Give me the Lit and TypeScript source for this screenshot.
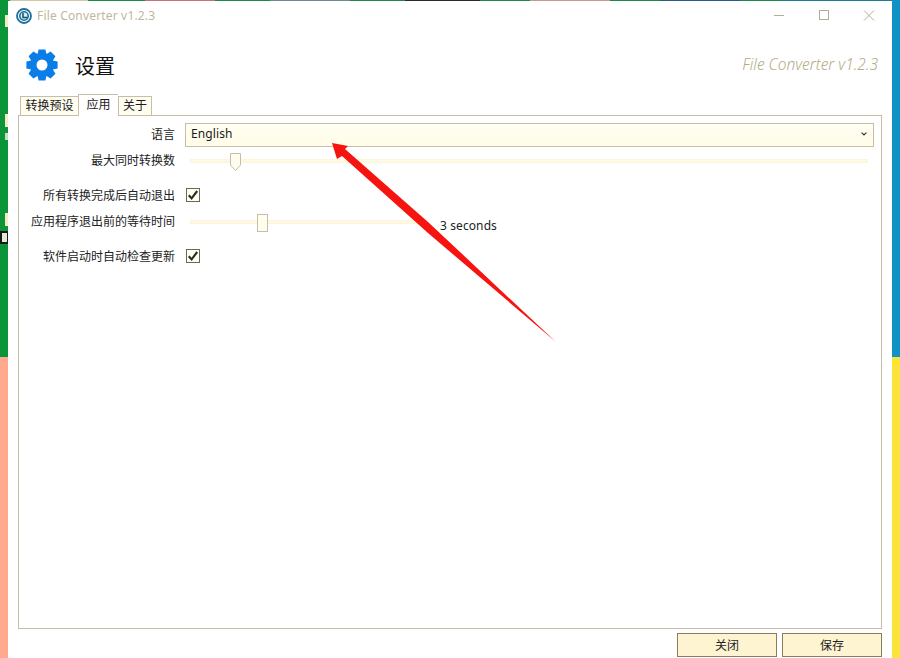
import { LitElement, html, css, svg } from "lit";
import { customElement } from "lit/decorators.js";

const FONT = css`"Noto Sans", "Noto Sans CJK SC", sans-serif`;

@customElement("app-root")
export class AppRoot extends LitElement {
  static styles = css`
    :host {
      display: block;
      position: relative;
      width: 900px;
      height: 658px;
      overflow: hidden;
      font-family: ${FONT};
      color: #1a1a1a;
      background:
        linear-gradient(to right,
          #0b9438 0 10px, #cfc8a8 10px 88px, #1a8a48 88px 145px, #c9707a 145px 215px,
          #1a8a48 215px 270px, #6f8a94 270px 350px, #1a8a48 350px 405px, #2a2a2a 405px 480px,
          #1a8a48 480px 530px, #c99a88 530px 610px, #1a8a48 610px 660px, #2d5a80 660px 740px,
          #1a8a48 740px 780px, #1b7f94 780px 892px, #0f93c4 892px) 0 0 / 100% 1px no-repeat,
        linear-gradient(#f1ecc6, #f1ecc6) 5px 15px / 3px 12px no-repeat,
        linear-gradient(#f1ecc6, #f1ecc6) 5px 114px / 3px 13px no-repeat,
        linear-gradient(#f1ecc6, #f1ecc6) 5px 213px / 3px 13px no-repeat,
        linear-gradient(#c8dcc8, #c8dcc8) 5px 133px / 3px 7px no-repeat,
        linear-gradient(#e6e6da, #e6e6da) 2px 233px / 5px 9px no-repeat,
        linear-gradient(#101d12, #101d12) 0 231px / 8px 13px no-repeat,
        linear-gradient(to right, #0b9438 0 8px, transparent 8px 892px, #0f93c4 892px) 0 0 / 100% 357px no-repeat,
        linear-gradient(to right, #ffa98f 0 8px, transparent 8px 892px, #fbe43a 892px) 0 357px / 100% 301px no-repeat;
    }
    .frame {
      box-sizing: border-box;
      height: 658px;
      padding: 1px 8px 0;
      display: flex;
    }
    .win {
      flex: 1;
      background: #fff;
      display: flex;
      flex-direction: column;
      padding: 0 10px 1px;
      min-width: 0;
    }
    .titlebar {
      height: 29px;
      margin: 0 -10px;
      padding: 0 0 0 8px;
      display: flex;
      align-items: center;
      font-size: 12px;
      letter-spacing: 0.17px;
      color: #bfb79d;
    }
    .titlebar .name { margin-left: 5px; }
    .titlebar .grow { flex: 1; }
    .wbtn { width: 45px; height: 29px; display: flex; align-items: center; justify-content: center; }
    .wbtn.last { width: 46px; }
    .header {
      height: 64px;
      box-sizing: border-box;
      padding: 6px 4px 0 8px;
      display: flex;
      align-items: center;
      gap: 17px;
    }
    .header h1 {
      margin: 0;
      font-size: 20px;
      font-weight: 400;
      color: #111;
      flex: 1;
    }
    .version {
      font-size: 15.5px;
      font-style: italic;
      font-weight: 300;
      color: #b5ac86;
      margin-top: -3px;
    }
    .tabs {
      display: flex;
      align-items: flex-end;
      height: 22px;
      padding-left: 2px;
      position: relative;
      z-index: 1;
      margin-bottom: -1px;
    }
    .tab {
      box-sizing: border-box;
      height: 19px;
      margin-bottom: 1px;
      border: 1px solid #c7bfa5;
      border-bottom: none;
      border-right: none;
      font-size: 12px;
      line-height: 18px;
      padding: 0 2px;
      text-align: center;
      background: #fffdf0;
    }
    .tab:nth-child(1) { width: 58px; }
    .tab.active { width: 40px; height: 22px; margin-bottom: 0; background: #fff; line-height: 20px; }
    .tab:nth-child(3) { width: 34px; border-right: 1px solid #c7bfa5; }
    .panel {
      flex: 1;
      border: 1px solid #c7bfa5;
      box-sizing: border-box;
      padding: 7px 7px 0 0;
      display: flex;
      flex-direction: column;
      min-height: 0;
    }
    .row {
      display: grid;
      grid-template-columns: 156px 1fr;
      column-gap: 10px;
      align-items: center;
      font-size: 12px;
    }
    .label { text-align: right; color: #222; line-height: 16px; white-space: nowrap; }
    .r-lang { height: 24px; }
    .r-max { height: 24px; margin-top: 2px; margin-bottom: 15px; }
    .r-auto { height: 14px; margin-bottom: 7px; }
    .r-wait { height: 24px; margin-bottom: 16px; }
    .r-upd { height: 14px; }
    .r-auto .label, .r-upd .label { height: 14px; line-height: 15px; }
    .select {
      box-sizing: border-box;
      height: 24px;
      border: 1px solid #c7bfa5;
      background: linear-gradient(#fffef2, #fffce8);
      display: flex;
      align-items: center;
      justify-content: space-between;
      padding: 0 6px 3px 5px;
      font-size: 12px;
      letter-spacing: 0.1px;
    }
    .slider {
      position: relative;
      height: 24px;
      margin: 0 6px 0 5px;
    }
    .slider .track {
      position: absolute;
      left: 0; right: 0; top: 10px;
      height: 4px;
      box-sizing: border-box;
      border: 1px solid #fbf5dc;
      background: #fff9e2;
    }
    .slider svg { position: absolute; top: 4px; left: var(--thumb); }
    .waitwrap { display: flex; align-items: center; }
    .waitwrap .slider { width: 230px; flex: none; }
    .waitwrap span { font-size: 12px; margin: 8px 0 0 14px; color: #222; letter-spacing: .1px; }
    .check {
      box-sizing: border-box;
      width: 14px;
      height: 14px;
      margin-left: 1px;
      border: 1px solid #6d6650;
      background: #fffef4;
      display: flex;
      align-items: center;
      justify-content: center;
    }
    .footer {
      height: 28px;
      display: flex;
      justify-content: flex-end;
      align-items: flex-end;
      gap: 5px;
    }
    .btn {
      box-sizing: border-box;
      width: 100px;
      height: 24px;
      border: 1px solid #8a7d5f;
      background: #fff4d2;
      font: 12px ${FONT};
      color: #222;
      padding: 0;
    }
    .arrow { position: absolute; left: 0; top: 0; pointer-events: none; }
  `;

  private gear() {
    const teeth = [0, 45, 90, 135, 180, 225, 270, 315];
    return html`<svg width="32" height="32" viewBox="-16 -16 32 32">
      ${teeth.map((a) => svg`<path d="M-3.4-15.6h6.8l1.4 6h-9.6z" fill="#0a7ee6" transform="rotate(${a})"/>`)}
      <circle r="8.7" fill="none" stroke="#0a7ee6" stroke-width="6.4"/>
    </svg>`;
  }

  private thumbPointed() {
    return html`<svg width="12" height="19" viewBox="0 0 12 19" style="--thumb:40px">
      <path d="M.5.5h10v11.5L5.5 17.5.5 12z" fill="#fffdf0" stroke="#c7bfa5"/>
    </svg>`;
  }

  private thumbRect() {
    return html`<svg width="12" height="19" viewBox="0 0 12 19" style="--thumb:67px">
      <rect x=".5" y=".5" width="10" height="17" fill="#fffdf0" stroke="#c7bfa5"/>
    </svg>`;
  }

  private checkMark() {
    return html`<svg width="12" height="12" viewBox="0 0 12 12">
      <path d="M1.8 6.2 4.6 9.4 10.2 2" fill="none" stroke="#2a2a1e" stroke-width="2.1"/>
    </svg>`;
  }

  render() {
    return html`
      <div class="frame">
        <div class="win">
          <div class="titlebar">
            <svg width="16" height="16" viewBox="0 0 16 16">
              <circle cx="8" cy="8" r="7" fill="none" stroke="#1d6f9c" stroke-width="1.8"/>
              <circle cx="8" cy="8" r="4.2" fill="#d9eaf3" stroke="#1d6f9c" stroke-width="1.6"/>
              <path d="M7 5v4.6h4.4" fill="none" stroke="#14506f" stroke-width="1.5"/>
            </svg>
            <span class="name">File Converter v1.2.3</span>
            <span class="grow"></span>
            <div class="wbtn"><svg width="12" height="12"><path d="M1 5.5h10" stroke="#b5ad94"/></svg></div>
            <div class="wbtn"><svg width="12" height="12"><rect x="1.5" y="0.5" width="9" height="9" fill="none" stroke="#b5ad94"/></svg></div>
            <div class="wbtn last"><svg width="12" height="12"><path d="M1 0.5l10 10M11 0.5L1 10.5" stroke="#b5ad94"/></svg></div>
          </div>
          <div class="header">
            ${this.gear()}
            <h1>设置</h1>
            <span class="version">File Converter v1.2.3</span>
          </div>
          <div class="tabs">
            <div class="tab">转换预设</div>
            <div class="tab active">应用</div>
            <div class="tab">关于</div>
          </div>
          <div class="panel">
            <div class="row r-lang">
              <div class="label">语言</div>
              <div class="select">
                <span>English</span>
                <svg width="6" height="4" viewBox="0 0 6 4"><path d="M.6.6 3 3 5.4.6" fill="none" stroke="#333" stroke-width="1.1"/></svg>
              </div>
            </div>
            <div class="row r-max">
              <div class="label">最大同时转换数</div>
              <div class="slider"><div class="track"></div>${this.thumbPointed()}</div>
            </div>
            <div class="row r-auto">
              <div class="label">所有转换完成后自动退出</div>
              <div class="check">${this.checkMark()}</div>
            </div>
            <div class="row r-wait">
              <div class="label">应用程序退出前的等待时间</div>
              <div class="waitwrap">
                <div class="slider"><div class="track"></div>${this.thumbRect()}</div>
                <span>3 seconds</span>
              </div>
            </div>
            <div class="row r-upd">
              <div class="label">软件启动时自动检查更新</div>
              <div class="check">${this.checkMark()}</div>
            </div>
          </div>
          <div class="footer">
            <button class="btn">关闭</button>
            <button class="btn">保存</button>
          </div>
        </div>
      </div>
      <svg class="arrow" width="900" height="658" viewBox="0 0 900 658">
        <path d="M332 143 348 146 345 149 428 222 556 342 428 233 342 156 337 159z" fill="#f5140f"/>
      </svg>
    `;
  }
}
